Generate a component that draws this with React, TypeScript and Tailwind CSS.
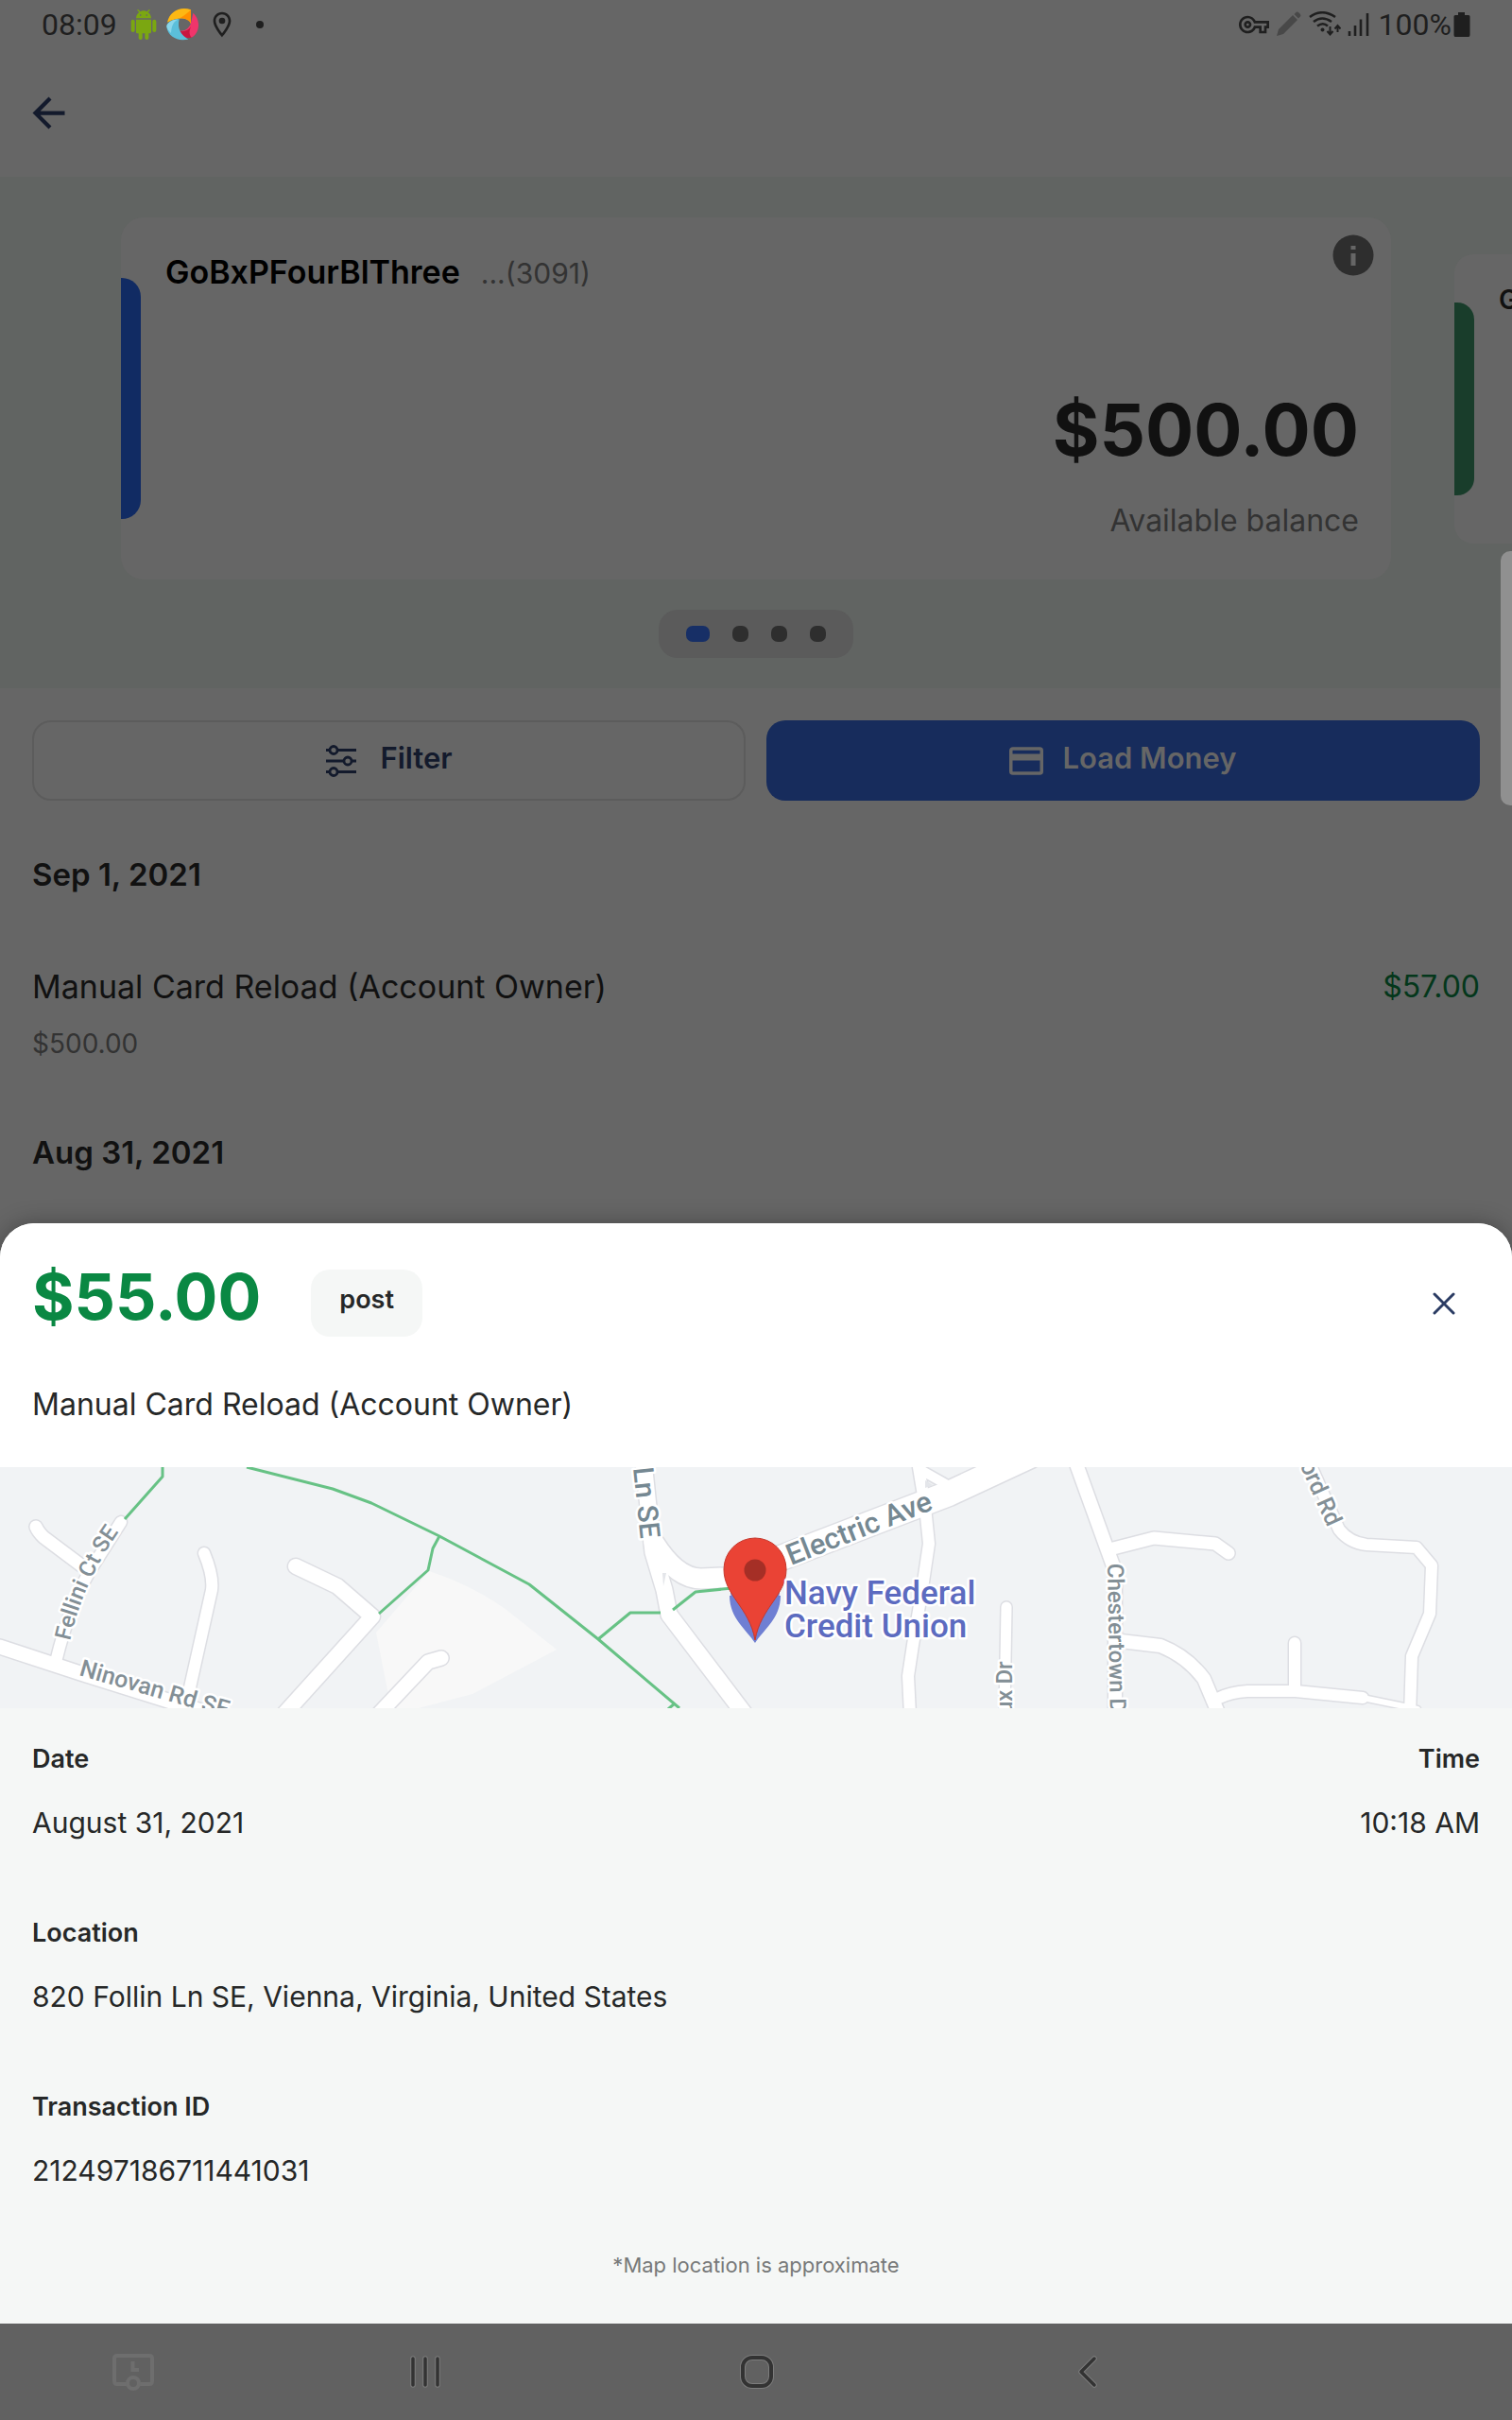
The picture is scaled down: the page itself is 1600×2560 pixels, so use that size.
import { MdArrowBack, MdOutlineVpnKey, MdOutlineLocationOn } from "react-icons/md";

const roads: { d: string; w: number }[] = [
  { d: "M0 190 L82 217 L245 268", w: 15 },
  { d: "M128 58 L100 102 Q75 140 59 206", w: 12 },
  { d: "M38 63 Q40 68 46 74 L86 104", w: 13 },
  { d: "M216 91 Q226 115 224 130 L199 242", w: 12 },
  { d: "M313 105 L357 126 L394 158 L300 262", w: 16 },
  { d: "M467 202 L453 206 L400 262", w: 15 },
  { d: "M681 -6 L691 90 L703 130 L708 156 L790 264", w: 17 },
  { d: "M692 80 Q716 118 742 118 L790 116", w: 21 },
  { d: "M790 110 L1004 28 L1090 -12", w: 26 },
  { d: "M971 -6 L979 42 L983 81 L976 128 L966 188 L961 221 L963 262", w: 12 },
  { d: "M976 4 L1008 22", w: 10 },
  { d: "M1065 148 L1063 262", w: 11 },
  { d: "M1138 -6 L1180 110 L1180 262", w: 14 },
  { d: "M1178 86 L1221 75 L1286 81 L1300 91", w: 13 },
  { d: "M1186 184 L1228 189 Q1256 200 1274 224 L1290 262", w: 14 },
  { d: "M1288 245 Q1302 238 1320 237 L1371 237 L1442 244", w: 12 },
  { d: "M1442 244 L1500 256", w: 6 },
  { d: "M1370 186 L1370 236", w: 12 },
  { d: "M1385 -6 L1417 66 Q1428 80 1446 82 L1499 85 L1515 104 L1513 155 L1494 200 L1492 262", w: 12 },
];

const paths = [
  "M172 0 V10 L132 55",
  "M261 0 L352 23 L393 38 L465 73 L560 124 L633 182 L719 255",
  "M465 73 L458 86 L453 109 L401 155",
  "M633 182 L667 154 L699 154",
  "M712 151 L736 132 L775 128",
  "M714 250 L707 256",
];

function StreetMap() {
  return (
    <svg
      viewBox="0 0 1600 255"
      preserveAspectRatio="xMidYMid slice"
      className="block h-[255px] w-full bg-[#f1f3f5]"
      role="img"
      aria-label="Map of the transaction location"
    >
      <path d="M454 110 Q500 125 536 151 L589 193 L500 240 L439 256 H414 L398 175 Z" fill="#f8f8f8" />
      <g fill="none" strokeLinecap="round" strokeLinejoin="round">
        {roads.map((r) => (
          <path key={r.d} d={r.d} stroke="#dddee3" strokeWidth={r.w + 3} />
        ))}
        {roads.map((r) => (
          <path key={r.d} d={r.d} stroke="#ffffff" strokeWidth={r.w} />
        ))}
      </g>
      <path d="M701 112 L705 112 L702 126 Z" fill="#e4e6ea" />
      <path d="M979 14 L987 19 L979 22 Z" fill="#e4e6ea" />
      <g fill="none" stroke="#67c285" strokeWidth="3" strokeLinejoin="round">
        {paths.map((d) => (
          <path key={d} d={d} />
        ))}
      </g>
      <defs>
        <path id="fellini" d="M74 184 Q90 112 138 52" />
      </defs>
      <g
        fontFamily="Roboto, sans-serif"
        fontSize="24"
        fontWeight="500"
        fill="#838f96"
        stroke="#ffffff"
        strokeWidth="5"
        strokeLinejoin="round"
        paintOrder="stroke"
      >
        <text>
          <textPath href="#fellini">Fellini Ct SE</textPath>
        </text>
        <text transform="translate(83 220) rotate(16)" fontSize="25">Ninovan Rd SE</text>
        <text transform="translate(670 1) rotate(84)" fontSize="30" fill="#758892">Ln SE</text>
        <text transform="translate(837 104) rotate(-21.5)" fontSize="31" fill="#758892">Electric Ave</text>
        <text transform="translate(1071 261) rotate(-90)">ux Dr</text>
        <text transform="translate(1172 102) rotate(89)">Chestertown Dr</text>
        <text transform="translate(1405 64) rotate(66)" textAnchor="end" fontSize="25">ord Rd</text>
      </g>
      <path d="M799 185 C790 160 773 150 773 130 A26 26 0 0 1 825 130 C825 150 808 160 799 185 Z" fill="#6f7fd3" />
      <path d="M799 186 C790 172 772 160 772 136 H826 C826 160 808 172 799 186 Z" fill="#6f7fd3" />
      <path
        d="M799 183 C793 148 766 136 766 108 A33 33 0 0 1 832 108 C832 136 805 148 799 183 Z"
        fill="#ea4335"
        stroke="#c5372c"
        strokeWidth="1"
      />
      <circle cx="799" cy="109" r="11.5" fill="#a52f26" />
      <g
        fontFamily="Roboto, sans-serif"
        fontSize="35"
        fontWeight="500"
        fill="#5c6bc0"
        stroke="#ffffff"
        strokeWidth="5"
        strokeLinejoin="round"
        paintOrder="stroke"
      >
        <text x="830" y="145">Navy Federal</text>
        <text x="830" y="180">Credit Union</text>
      </g>
    </svg>
  );
}

function StatusBar() {
  return (
    <div className="flex h-[52px] items-center justify-between pr-11 pl-[44px] font-['Roboto',sans-serif] text-[32px] leading-8 text-[#1f1f1f]">
      <div className="flex items-center">
        <span>08:09</span>
        <svg viewBox="0 0 24 24" className="ml-3 size-8" fill="#7ba711">
          <path d="M6 18c0 .55.45 1 1 1h1v3.5c0 .83.67 1.5 1.5 1.5s1.5-.67 1.5-1.5V19h2v3.5c0 .83.67 1.5 1.5 1.5s1.5-.67 1.5-1.5V19h1c.55 0 1-.45 1-1V8H6v10zM3.5 8C2.67 8 2 8.67 2 9.5v7c0 .83.67 1.5 1.5 1.5S5 17.33 5 16.5v-7C5 8.67 4.33 8 3.5 8zm17 0c-.83 0-1.5.67-1.5 1.5v7c0 .83.67 1.5 1.5 1.5s1.5-.67 1.5-1.5v-7c0-.83-.67-1.5-1.5-1.5zm-4.97-5.84l1.3-1.3c.2-.2.2-.51 0-.71-.2-.2-.51-.2-.71 0l-1.48 1.48C13.85 1.23 12.95 1 12 1c-.96 0-1.86.23-2.66.63L7.85.15c-.2-.2-.51-.2-.71 0-.2.2-.2.51 0 .71l1.31 1.31C6.97 3.26 6 5.01 6 7h12c0-1.99-.97-3.75-2.47-4.84zM10 5H9V4h1v1zm5 0h-1V4h1v1z" />
        </svg>
        <svg viewBox="528 26 102 102" className="ml-2 size-[34px]">
          <path d="M613 40 C636 60 636 98 612 116 C596 124 574 116 571 97 C592 98 604 84 607 68 Z" fill="#f0356b" />
          <path d="M571 97 C582 101 596 97 606 84 C600 98 600 110 608 118 C590 122 574 114 571 97 Z" fill="#c8173f" />
          <path d="M531 70 C538 36 572 18 606 30 V74 C598 54 566 52 531 70 Z" fill="#fdb813" />
          <path d="M572 56 C590 46 600 36 606 30 V74 C602 64 590 57 572 56 Z" fill="#ff9100" />
          <path d="M569 60 C545 60 529 72 529 84 C531 110 556 126 580 126 L598 124 C574 110 562 90 569 60 Z" fill="#5bbfda" />
          <path d="M569 60 C556 64 545 74 543 104 C536 96 530 90 529 82 C532 70 548 60 569 60 Z" fill="#8ad6ea" />
        </svg>
        <MdOutlineLocationOn className="ml-[9px] size-8" />
        <span className="ml-5 size-2 rounded-full bg-[#1f1f1f]" />
      </div>
      <div className="flex items-center">
        <MdOutlineVpnKey className="size-8" />
        <svg viewBox="0 0 26 28" className="ml-2 h-7 w-[26px]" fill="#484848">
          <path d="M0 26 L2 19 L17 4 L22 9 L7 24 Z M18.500 3 L20.500 1 Q22 0 23.500 1.500 L25 3 Q26 4.500 25 5.500 L23 7.500 Z" />
        </svg>
        <svg viewBox="0 0 34 28" className="ml-2 h-7 w-[34px]" fill="none" stroke="#1f1f1f" strokeWidth="2.600">
          <path d="M1 6 Q14 -3.500 28 6" />
          <path d="M5 11 Q14 4 24 11" />
          <path d="M9 15.500 Q15 11 20 15.500" />
          <circle cx="14.500" cy="19.500" r="2" fill="#1f1f1f" stroke="none" />
          <path d="M22.500 16 V24 M19.500 21 L22.500 24.500 L25.500 21 M30.500 22 V15 M27.500 18.500 L30.500 15 L33.500 18.500" strokeWidth="2" />
        </svg>
        <svg viewBox="0 0 24 26" className="ml-1.5 h-[26px] w-6" stroke="#1f1f1f" strokeWidth="2.600">
          <path d="M3 20 V25 M9 14 V25 M15 7.500 V25 M22 1 V25" />
        </svg>
        <span className="ml-2.5">100%</span>
        <svg viewBox="0 0 18 26" className="ml-0.5 h-[26px] w-[18px]" fill="#1f1f1f">
          <path d="M5 0 H12 V3 H16 Q17.500 3 17.500 4.500 V24 Q17.500 26 16 26 H2 Q0.500 26 0.500 24 V4.500 Q0.500 3 2 3 H5 Z" />
        </svg>
      </div>
    </div>
  );
}

function AccountCards() {
  return (
    <section className="bg-[#616462] pt-[43px] pb-8" aria-label="Accounts">
      <div className="flex items-center gap-[67px] overflow-hidden px-[8%]">
        <article className="flex h-[383px] w-full shrink-0 items-stretch rounded-[24px] bg-[#666666]">
          <div className="my-16 w-[21px] rounded-r-[20px] bg-[#112b63]" />
          <div className="flex flex-1 flex-col justify-between pt-[18px] pr-[34px] pb-[42px] pl-[26px]">
            <div className="flex items-start justify-between">
              <div className="flex items-baseline gap-[22px] pt-4 leading-[48px]">
                <h2 className="text-[34px] font-semibold text-black">GoBxPFourBlThree</h2>
                <span className="text-[30px] text-[#333333]">...(3091)</span>
              </div>
              <button
                type="button"
                aria-label="Account information"
                className="mr-[-16px] flex size-[44px] items-center justify-center rounded-full"
              >
                <svg viewBox="0 0 44 44" className="size-[44px]">
                  <circle cx="22" cy="22" r="21.500" fill="#2e2e2e" />
                  <path d="M19.500 12 h5 v4 h-5 Z M19.500 20 h5 v13 h-5 Z" fill="#666666" />
                </svg>
              </button>
            </div>
            <div className="text-right">
              <p className="text-[76px] leading-[80px] font-bold text-[#111111]">$500.00</p>
              <p className="mt-[37px] text-[32px] leading-10 text-[#333333]">Available balance</p>
            </div>
          </div>
        </article>
        <article className="flex h-[306px] w-full shrink-0 items-stretch rounded-[20px] bg-[#666666]">
          <div className="my-[51px] w-[21px] rounded-r-[18px] bg-[#193d2b]" />
          <h2 className="pt-7 pl-[26px] text-[28px] leading-10 font-semibold text-[#111111]">G</h2>
        </article>
      </div>
      <div className="mx-auto mt-8 flex h-[51px] w-[206px] items-center justify-center gap-6 rounded-[20px] bg-[#5b5b5b]">
        <button type="button" aria-label="Account 1" className="h-[17px] w-[25px] rounded-[7px] bg-[#172f66]" />
        <button type="button" aria-label="Account 2" className="size-[17px] rounded-[7px] bg-[#2e2e2e]" />
        <button type="button" aria-label="Account 3" className="size-[17px] rounded-[7px] bg-[#2e2e2e]" />
        <button type="button" aria-label="Account 4" className="size-[17px] rounded-[7px] bg-[#2e2e2e]" />
      </div>
    </section>
  );
}

function Actions() {
  return (
    <div className="grid grid-cols-2 gap-[22px] pt-[34px] text-[31px] leading-10 font-semibold">
      <button
        type="button"
        className="flex h-[85px] items-center justify-center gap-6 rounded-[20px] border-2 border-[#5c5c5c] text-[#131a2c]"
      >
        <svg viewBox="0 0 34 34" className="size-[34px]" fill="none" stroke="currentColor" strokeWidth="2.800">
          <path d="M1 5.500 H5 M13 5.500 H33 M1 17 H20 M28 17 H33 M1 28.500 H5 M13 28.500 H33" />
          <circle cx="9" cy="5.500" r="4" />
          <circle cx="24" cy="17" r="4" />
          <circle cx="9" cy="28.500" r="4" />
        </svg>
        <span className="pb-1.5">Filter</span>
      </button>
      <button
        type="button"
        className="flex h-[85px] items-center justify-center gap-5 rounded-[20px] bg-[#172c5c] text-[#666666]"
      >
        <svg viewBox="0 0 36 30" className="h-[30px] w-9" fill="none" stroke="currentColor" strokeWidth="3.500">
          <rect x="1.750" y="2" width="32.500" height="26" rx="2" />
          <path d="M2 11 H34" strokeWidth="7" />
        </svg>
        <span className="pb-1.5">Load Money</span>
      </button>
    </div>
  );
}

function Detail({ label, value, right }: { label: string; value: string; right?: boolean }) {
  return (
    <div className={right ? "text-right" : ""}>
      <dt className="text-[27px] leading-9 font-semibold text-[#262828]">{label}</dt>
      <dd className="mt-[29px] mb-px text-[30px] leading-10 text-[#262828]">{value}</dd>
    </div>
  );
}

function TransactionSheet() {
  return (
    <section
      role="dialog"
      aria-label="Transaction details"
      className="overflow-hidden rounded-t-[36px] bg-[#f5f7f6] shadow-[0_0_24px_rgba(0,0,0,0.3)]"
    >
      <div className="bg-white px-[34px] pt-[49px] pb-[46px]">
        <div className="flex h-[71px] items-center">
          <p className="self-start text-[68px] leading-14 font-bold text-[#0a8843]">$55.00</p>
          <span className="ml-[53px] flex h-[71px] items-center rounded-[20px] bg-[#f5f7f6] px-[30px] pb-2 text-[27px] leading-9 font-semibold text-[#262828]">
            post
          </span>
          <button type="button" aria-label="Close" className="mr-[14px] ml-auto flex size-12 items-center justify-center">
            <svg viewBox="0 0 24 24" className="size-6" stroke="#2b3c63" strokeWidth="3" strokeLinecap="round">
              <path d="M2 2 L22 22 M22 2 L2 22" />
            </svg>
          </button>
        </div>
        <p className="mt-[52px] text-[32px] leading-10 text-[#262828]">Manual Card Reload (Account Owner)</p>
      </div>
      <StreetMap />
      <div className="px-[34px] pt-9 pb-[46px]">
        <dl className="flex flex-col gap-[78px]">
          <div className="flex justify-between">
            <Detail label="Date" value="August 31, 2021" />
            <Detail label="Time" value="10:18 AM" right />
          </div>
          <Detail label="Location" value="820 Follin Ln SE, Vienna, Virginia, United States" />
          <Detail label="Transaction ID" value="212497186711441031" />
        </dl>
        <p className="mt-[63px] text-center text-[22px] leading-8 text-[#777979]">*Map location is approximate</p>
      </div>
    </section>
  );
}

function NavBar() {
  return (
    <nav
      aria-label="System navigation"
      className="grid h-[102px] grid-cols-[281fr_338fr_363fr_338fr_280fr] items-center justify-items-center bg-[#616161]"
    >
      <button type="button" aria-label="Screen timeout">
        <svg viewBox="0 0 44 40" className="h-10 w-11" fill="none" stroke="#6e6e6e" strokeWidth="4">
          <path d="M15 33 H5 Q2 33 2 30 V6 Q2 3 5 3 H39 Q42 3 42 6 V30 Q42 33 39 33 H29" />
          <path d="M21.500 9 V18 H28" />
          <circle cx="22" cy="32" r="6" />
        </svg>
      </button>
      <button type="button" aria-label="Recent apps">
        <svg viewBox="0 0 34 36" className="h-9 w-[34px]" fill="none" strokeLinecap="round">
          <path d="M4 4 V32 M17 4 V32 M30 4 V32" stroke="#7c7c7c" strokeWidth="5.500" />
          <path d="M4 4 V32 M17 4 V32 M30 4 V32" stroke="#333333" strokeWidth="3.500" />
        </svg>
      </button>
      <button type="button" aria-label="Home">
        <svg viewBox="0 0 38 38" className="size-[38px]" fill="none">
          <rect x="4" y="4" width="30" height="30" rx="10" stroke="#7c7c7c" strokeWidth="6" />
          <rect x="4" y="4" width="30" height="30" rx="10" stroke="#333333" strokeWidth="4" />
        </svg>
      </button>
      <button type="button" aria-label="Back">
        <svg viewBox="0 0 22 36" className="h-9 w-[22px]" fill="none" strokeLinecap="round" strokeLinejoin="round">
          <path d="M18 4 L4 18 L18 32" stroke="#7c7c7c" strokeWidth="5.500" />
          <path d="M18 4 L4 18 L18 32" stroke="#333333" strokeWidth="3.500" />
        </svg>
      </button>
    </nav>
  );
}

export default function App() {
  return (
    <div className="relative flex min-h-screen flex-col overflow-hidden bg-[#666666] font-['Inter',sans-serif]">
      <StatusBar />
      <header className="flex h-[135px] items-center pl-[26px]">
        <button type="button" aria-label="Back to accounts" className="text-[#131a2c]">
          <MdArrowBack className="size-[51px]" />
        </button>
      </header>
      <AccountCards />
      <main className="flex-1 px-[34px] pb-[51px]">
        <Actions />
        <h3 className="mt-[54px] text-[33px] leading-[48px] font-semibold text-[#111111]">Sep 1, 2021</h3>
        <div className="mt-[71px] flex justify-between leading-[48px] text-[#111111]">
          <p className="text-[34px]">Manual Card Reload (Account Owner)</p>
          <p className="text-[32px] text-[#04371b]">$57.00</p>
        </div>
        <p className="mt-4 text-[28px] leading-10 text-[#333333]">$500.00</p>
        <h3 className="mt-[71px] text-[33px] leading-[48px] font-semibold text-[#111111]">Aug 31, 2021</h3>
      </main>
      <TransactionSheet />
      <NavBar />
      <div className="absolute top-[583px] right-0 h-[269px] w-3 rounded-l-[10px] bg-[#909090]" />
    </div>
  );
}
